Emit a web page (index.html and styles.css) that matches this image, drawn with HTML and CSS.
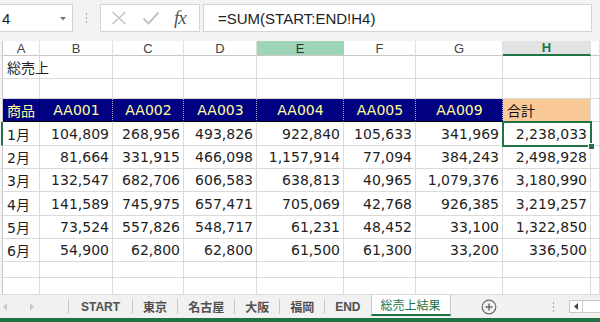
FILE: index.html
```html
<!DOCTYPE html>
<html lang="ja">
<head>
  <meta charset="UTF-8">
  <title>総売上結果</title>
  <link rel="stylesheet" href="styles.css">
</head>
<body>

  <div class="window">
    <div class="formula-bar">
      <div class="name-box">
        <span>4</span>
        <svg class="drop" width="6" height="4" viewBox="0 0 6 4"><path d="M0 0h6L3 3.5z" fill="#777"/></svg>
      </div>
      <div class="grip"><i></i><i></i><i></i></div>
      <div class="fx-box">
        <svg width="16" height="14" viewBox="0 0 16 14"><path d="M1.5 1L14.5 13M14.5 1L1.5 13" stroke="#c4c4c4" stroke-width="1.6" fill="none"/></svg>
        <svg width="18" height="14" viewBox="0 0 18 14"><path d="M1.5 7.5L6.5 12.5L16.5 1.5" stroke="#c4c4c4" stroke-width="2" fill="none"/></svg>
        <span class="fx">fx</span>
      </div>
      <div class="formula">=SUM(START:END!H4)</div>
    </div>

    <div class="sheet" id="sheet"></div>

    <div class="tabs">
      <div class="nav">
        <svg width="5" height="8" viewBox="0 0 5 8"><path d="M4 0v8L0 4z" fill="#c8c8c8"/></svg>
        <svg width="5" height="8" viewBox="0 0 5 8"><path d="M1 0v8L5 4z" fill="#c8c8c8"/></svg>
      </div>
      <div class="tab tab-wide">START</div>
      <div class="tab">東京</div>
      <div class="tab">名古屋</div>
      <div class="tab">大阪</div>
      <div class="tab">福岡</div>
      <div class="tab">END</div>
      <div class="tab current">総売上結果</div>
      <div class="add">
        <svg width="16" height="16" viewBox="0 0 16 16"><circle cx="8" cy="8" r="6.8" stroke="#666" stroke-width="1.2" fill="none"/><path d="M8 4.5v7M4.5 8h7" stroke="#666" stroke-width="1.4"/></svg>
      </div>
      <div class="grip tab-grip"><i></i><i></i><i></i></div>
      <div class="hscroll">
        <div class="hscroll-btn"><svg width="4" height="7" viewBox="0 0 4 7"><path d="M4 0v7L0 3.5z" fill="#444"/></svg></div>
      </div>
    </div>
    <div class="status"></div>
  </div>

  <script>
    const letters = ["", "A", "B", "C", "D", "E", "F", "G", "H", ""];

    const rows = [
      ["総売上"],
      [],
      ["商品", "AA001", "AA002", "AA003", "AA004", "AA005", "AA009", "合計"],
      ["1月", "104,809", "268,956", "493,826", "922,840", "105,633", "341,969", "2,238,033"],
      ["2月", "81,664", "331,915", "466,098", "1,157,914", "77,094", "384,243", "2,498,928"],
      ["3月", "132,547", "682,706", "606,583", "638,813", "40,965", "1,079,376", "3,180,990"],
      ["4月", "141,589", "745,975", "657,471", "705,069", "42,768", "926,385", "3,219,257"],
      ["5月", "73,524", "557,826", "548,717", "61,231", "48,452", "33,100", "1,322,850"],
      ["6月", "54,900", "62,800", "62,800", "61,500", "61,300", "33,200", "336,500"],
      [],
      []
    ];

    const sheet = document.getElementById("sheet");

    function addCell(text, classes) {
      const cell = document.createElement("div");
      cell.className = "cell " + classes;
      cell.textContent = text || "";
      sheet.appendChild(cell);
    }

    // column letters
    letters.forEach((letter, c) => {
      let cls = "col-head";
      if (c === 0) cls += " corner";
      if (letter === "E") cls += " col-picked";
      if (letter === "H") cls += " col-active";
      addCell(letter, cls);
    });

    rows.forEach((row, r) => {
      addCell("", r === 3 ? "stub row-active" : "stub");
      for (let c = 0; c < 9; c++) {
        const text = row[c];
        let cls = "";
        if (r === 2 && c < 7) {
          cls = c === 0 ? "th th-first" : "th";
        } else if (r === 2 && c === 7) {
          cls = "th-total";
        } else if (r > 2 && c > 0) {
          cls = "num";
        }
        if (r === 3 && c === 7) cls += " active";
        addCell(text, cls);
      }
    });
  </script>

</body>
</html>
```

FILE: styles.css
```css
html, body {
  margin: 0;
  padding: 0;
}
body {
  width: 600px;
  height: 322px;
  overflow: hidden;
  background: #fff;
  font-family: "Liberation Sans", "Noto Sans CJK JP", sans-serif;
  color: #222;
}
.window {
  display: flex;
  flex-direction: column;
  height: 322px;
}

/* formula bar */
.formula-bar {
  height: 41px;
  box-sizing: border-box;
  padding-top: 4px;
  background: #f3f3f3;
  display: flex;
  align-items: flex-start;
}
.name-box, .fx-box, .formula {
  height: 28px;
  box-sizing: border-box;
  background: #fff;
  border: 1px solid #d4d4d4;
  display: flex;
  align-items: center;
}
.name-box {
  width: 74px;
  margin-left: -1px;
  padding-left: 2px;
  font-size: 15px;
  justify-content: space-between;
  padding-right: 6px;
}
.name-box .drop {
  margin-top: 1px;
}
.grip {
  width: 27px;
  height: 28px;
  display: flex;
  flex-direction: column;
  align-items: center;
  justify-content: center;
  gap: 2px;
}
.grip i {
  width: 1px;
  height: 2px;
  background: #a8a8a8;
}
.fx-box {
  width: 100px;
  padding-left: 10px;
  gap: 16px;
}
.fx-box svg:nth-child(2) {
  margin-left: -1px;
}
.fx {
  font-family: "Liberation Serif", serif;
  font-style: italic;
  font-size: 19px;
  color: #555;
  margin-left: -2px;
  letter-spacing: -1px;
}
.formula {
  width: 389px;
  margin-left: 3px;
  padding-left: 14px;
  font-size: 15px;
  color: #222;
}

/* grid */
.sheet {
  height: 254px;
  display: grid;
  grid-template-columns: 3px 37px 73px 71px 73px 87px 72px 87px 88px 1fr;
  grid-template-rows: 15px 23px 20px 23px 24px 23px 23px 24px 23px 23px 16px 17px;
  font-family: "DejaVu Sans", "Noto Sans CJK JP", sans-serif;
  font-size: 14px;
}
.cell {
  box-sizing: border-box;
  border-right: 1px solid #dadada;
  border-bottom: 1px solid #dadada;
  display: flex;
  align-items: center;
  padding: 0 3px 0 4px;
  white-space: nowrap;
  color: #1e1e1e;
}
.col-head {
  font-family: "Liberation Sans", sans-serif;
  font-size: 13px;
  color: #444;
  justify-content: center;
  padding: 0;
  background: #fff;
  border-bottom-color: #c8c8c8;
  border-right-color: #e0e0e0;
}
.col-picked {
  background: #9fd5b7;
  color: #333;
  border-right-color: #9fd5b7;
}
.col-active {
  background: #e2e2e2;
  color: #217346;
  border-bottom: 2px solid #217346;
  font-weight: bold;
}
.stub, .corner {
  padding: 0;
  background: #f6f6f6;
  border-right-color: #c8c8c8;
  border-bottom-color: #e6e6e6;
}
.row-active {
  border-right: 2px solid #217346;
}
.th {
  background: #000080;
  color: #ffff99;
  justify-content: center;
  border-right: 1px dotted #a9a9c9;
  border-bottom: 1px solid #000;
}
.th-first {
  justify-content: flex-start;
  border-right: 1px solid #000;
}
.th-total {
  background: #f9c897;
  color: #111;
  border-bottom-color: #f9c897;
  border-right-color: #dadada;
}
.num {
  justify-content: flex-end;
}
.active {
  position: relative;
}
.active::before {
  content: "";
  position: absolute;
  left: -1px;
  top: -1px;
  right: -2px;
  bottom: -2px;
  border: 2px solid #217346;
}
.active::after {
  content: "";
  position: absolute;
  right: -5px;
  bottom: -5px;
  width: 5px;
  height: 5px;
  background: #217346;
  border: 1px solid #fff;
}

/* sheet tabs */
.tabs {
  height: 23px;
  box-sizing: border-box;
  background: #f1f1f1;
  display: flex;
  align-items: stretch;
  font-size: 12px;
  font-weight: bold;
  color: #505050;
}
.nav {
  width: 68px;
  display: flex;
  align-items: center;
  gap: 21px;
  padding-left: 3px;
  box-sizing: border-box;
}
.tab {
  display: flex;
  align-items: center;
  padding: 0 10px;
  margin: 4px 0;
  border-left: 1px solid #c8c8c8;
}
.tab-wide {
  padding: 0 12px;
}
.tab.current {
  margin: 0 0 2px;
  background: #fff;
  color: #217346;
  font-weight: normal;
  border-right: 1px solid #c8c8c8;
  border-bottom: 2px solid #217346;
  padding: 0 9px;
}
.tab.current + .add {
  margin-left: 30px;
}
.add {
  display: flex;
  align-items: center;
}
.tab-grip {
  height: 23px;
  width: 16px;
  margin-left: 49px;
}
.hscroll {
  flex: 1;
  margin: 5px 0 5px 7px;
  border: 1px solid #c8c8c8;
  border-right: none;
  background: #fff;
  display: flex;
}
.hscroll-btn {
  width: 12px;
  border-right: 1px solid #c8c8c8;
  display: flex;
  align-items: center;
  justify-content: center;
}
.status {
  height: 4px;
  background: #217346;
}
```
